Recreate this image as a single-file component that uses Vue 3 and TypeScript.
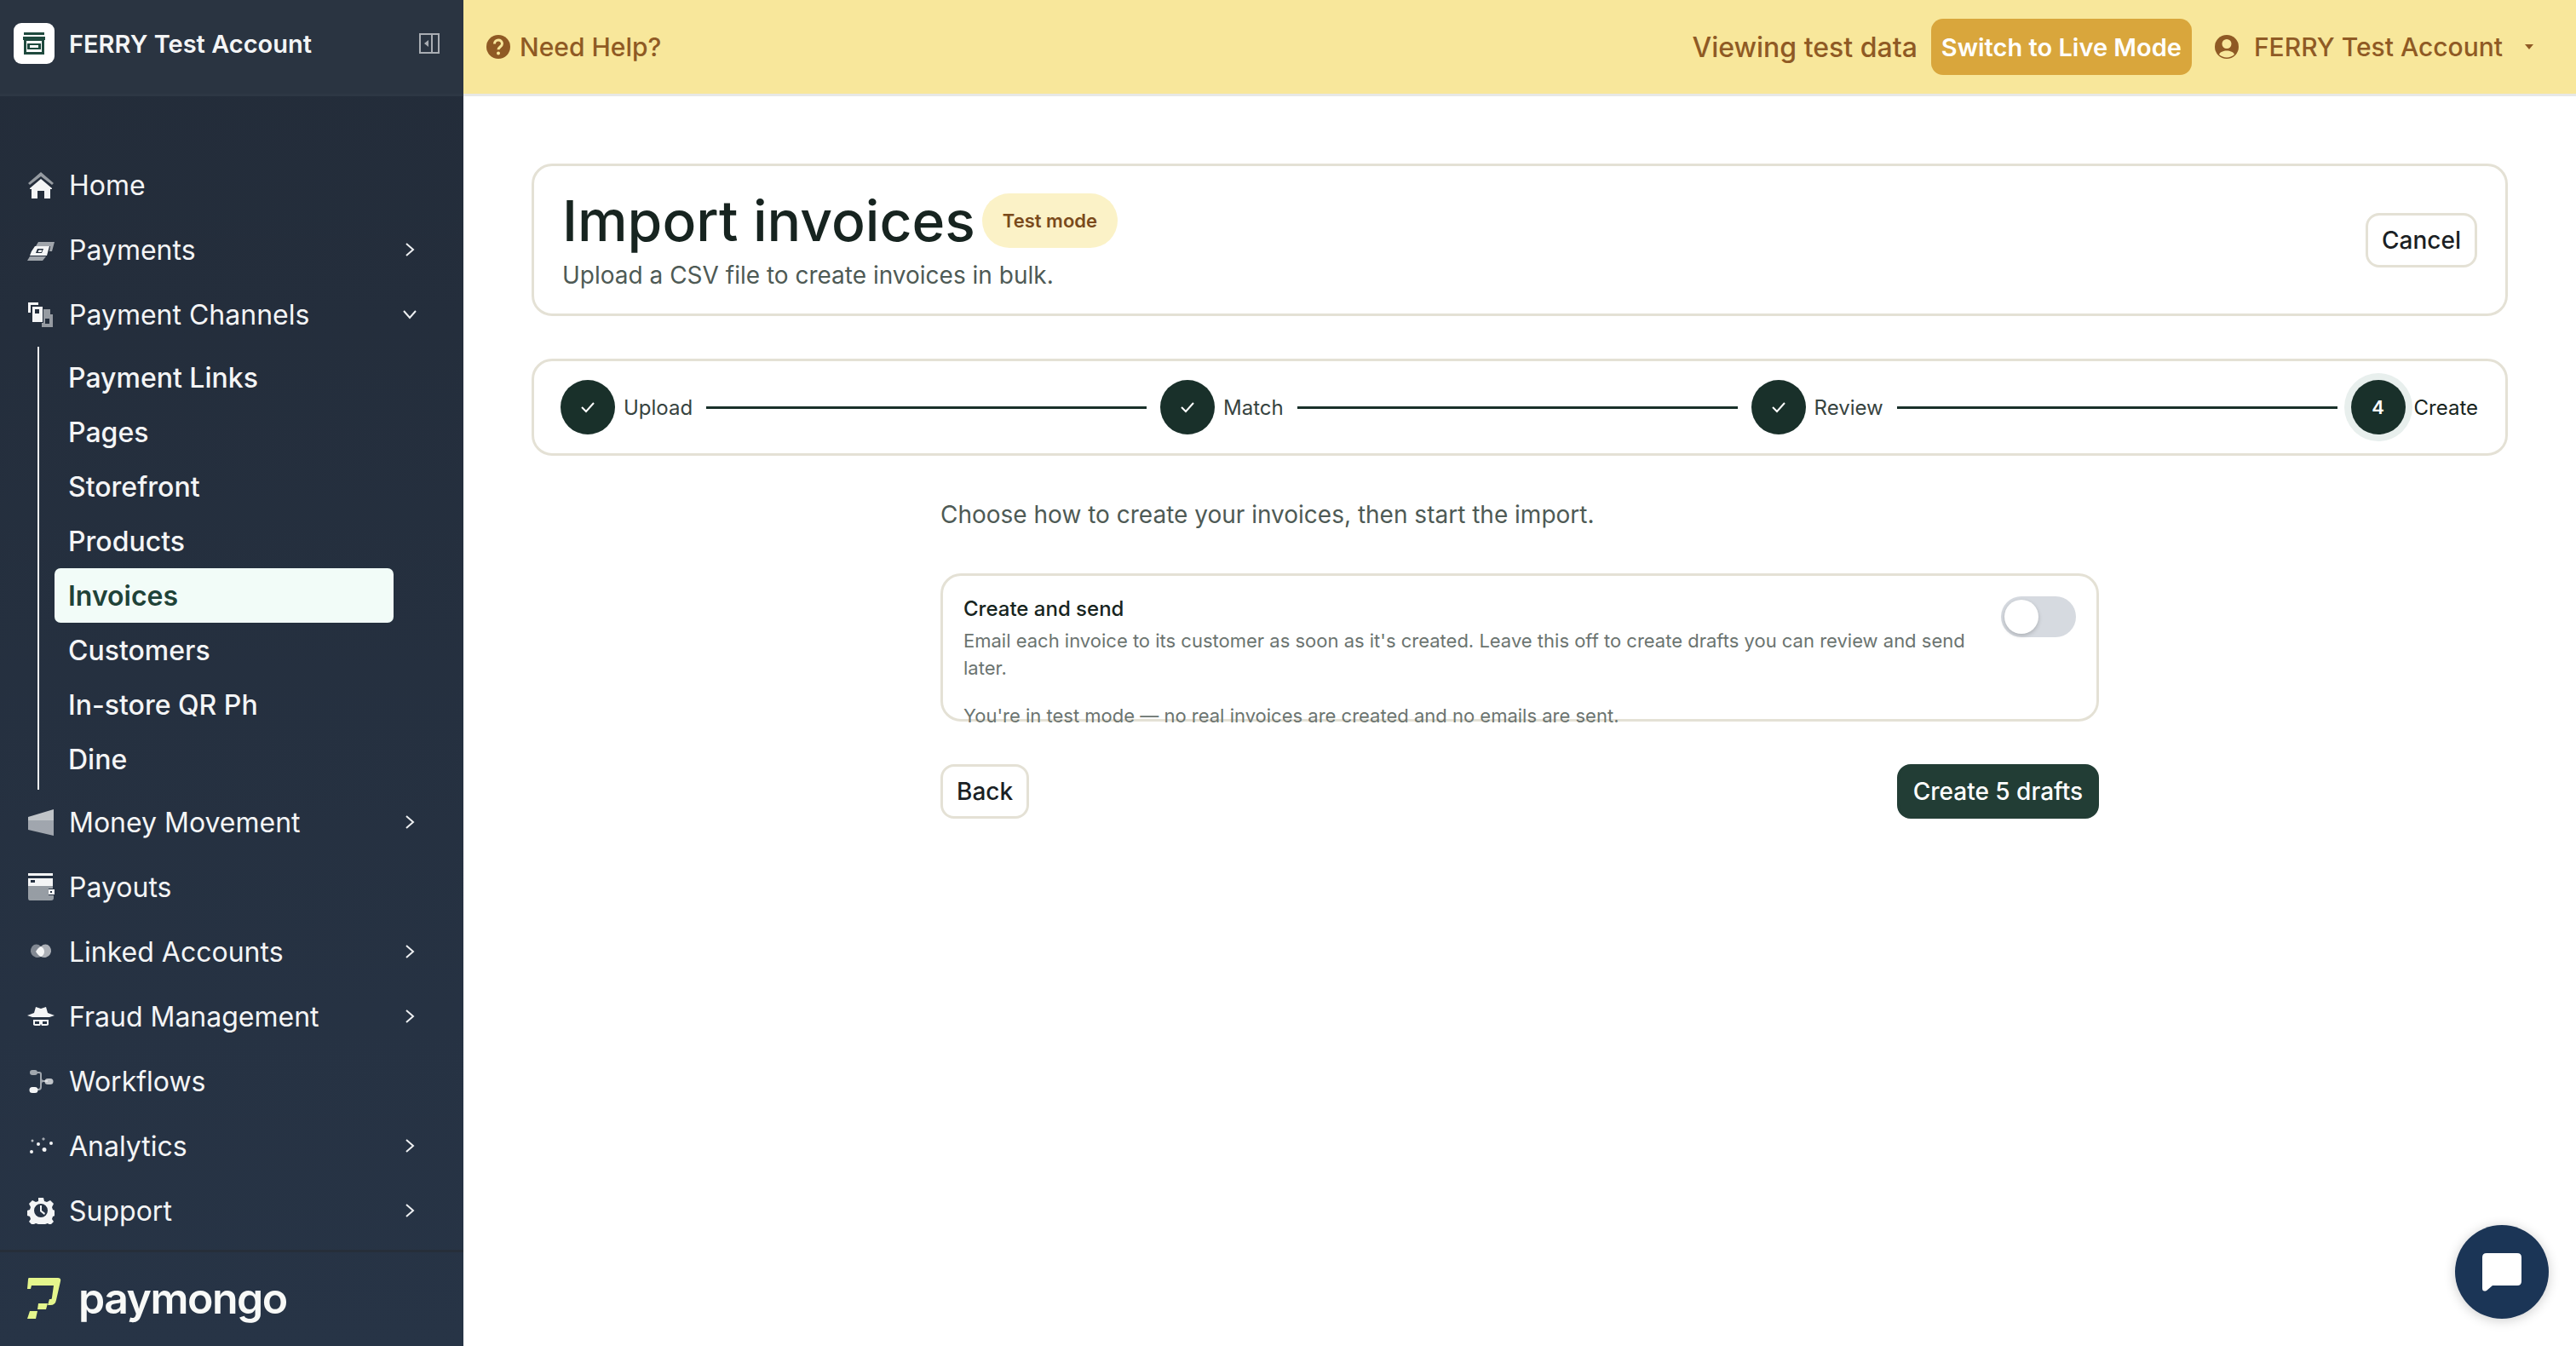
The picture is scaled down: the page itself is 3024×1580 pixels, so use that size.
<template>
  <div class="page">
    <aside class="sidebar">
      <div class="side-head">
        <div class="store-box">
          <svg width="30" height="30" viewBox="0 0 30 30">
            <path d="M3 2h24v3H3zM2 7h26v4h-1v17H3V11H2z" fill="#1f4a3e" />
            <path d="M6 12h18v13H6z" fill="#fff" />
            <path d="M7 15h16v7H7z" fill="#1f4a3e" />
            <path d="M10 17h10v3H10z" fill="#fff" />
          </svg>
        </div>
        <span class="store-name">FERRY Test Account</span>
        <svg class="panel-icon" width="24" height="24" viewBox="0 0 24 24">
          <path d="M1 1h22v22H1zM15 1v22" fill="none" stroke="#a9adb3" stroke-width="2" />
          <path d="M11 8v8l-5-4z" fill="#a9adb3" />
        </svg>
      </div>

      <nav class="nav">
        <template v-for="item in navItems" :key="item.label">
          <div class="nav-row">
            <svg class="nav-icon" width="32" height="32" viewBox="0 0 32 32">
              <path
                v-for="(p, i) in icons[item.icon]"
                :key="i"
                :d="p.d"
                fill="#f4f5f6"
                fill-rule="evenodd"
                :opacity="p.o ?? 1"
              />
            </svg>
            <span class="nav-label">{{ item.label }}</span>
            <svg v-if="item.arrow" class="chev" :class="{ open: item.children }" width="14" height="22" viewBox="0 0 14 22">
              <path d="M3 4l8 7-8 7" fill="none" stroke="#eef0f2" stroke-width="2" />
            </svg>
          </div>
          <div v-if="item.children" class="sub-list">
            <div v-for="c in item.children" :key="c" class="sub-row" :class="{ active: c === 'Invoices' }">{{ c }}</div>
          </div>
        </template>
      </nav>

      <div class="side-foot">
        <svg width="40" height="48" viewBox="0 0 40 48">
          <path d="M2 0h34q4 0 3 4l-5 22q-1 6-7 6h-3l2-7h2q1 0 1-2l2-14H5l-1 4H0l1-11q0-2 1-2z" fill="#e4f58c" />
          <path d="M13 30h11l-2 7H12zM3 39h9l-2 9H0z" fill="#e4f58c" />
        </svg>
        <span class="brand">paymongo</span>
      </div>
    </aside>

    <div class="content">
      <header class="topbar">
        <svg width="30" height="30" viewBox="0 0 30 30">
          <circle cx="15" cy="15" r="14" fill="#8f5a24" />
          <path d="M10.5 11.5c0-6 9-6 9 -.2 0 3.700-4.500 3.700-4.500 7" fill="none" stroke="#f8e79b" stroke-width="3" />
          <circle cx="15" cy="22.500" r="2" fill="#f8e79b" />
        </svg>
        <span class="help">Need Help?</span>
        <span class="spacer"></span>
        <span class="viewing">Viewing test data</span>
        <button class="live-btn">Switch to Live Mode</button>
        <svg class="user-icon" width="30" height="30" viewBox="0 0 30 30">
          <circle cx="15" cy="15" r="14" fill="#8f5a24" />
          <circle cx="15" cy="11.500" r="5.500" fill="#f8e79b" />
          <path d="M6 24c2-6 16-6 18 0-5 4.500-13 4.500-18 0z" fill="#f8e79b" />
        </svg>
        <span class="acct">FERRY Test Account</span>
        <svg class="caret" width="10" height="6" viewBox="0 0 10 6"><path d="M0 0h10L5 6z" fill="#8f5a24" /></svg>
      </header>

      <main class="body">
        <section class="card head-card">
          <div class="head-text">
            <div class="title-row">
              <h1>Import invoices</h1>
              <span class="badge">Test mode</span>
            </div>
            <p class="sub">Upload a CSV file to create invoices in bulk.</p>
          </div>
          <button class="btn">Cancel</button>
        </section>

        <section class="card stepper">
          <template v-for="(s, i) in steps" :key="s">
            <div class="step">
              <span class="dot" :class="{ current: i === 3 }">
                <svg v-if="i < 3" width="18" height="14" viewBox="0 0 18 14">
                  <path d="M2 7l5 5 9-10" fill="none" stroke="#fff" stroke-width="2" />
                </svg>
                <template v-else>4</template>
              </span>
              <span class="step-label" :class="{ current: i === 3 }">{{ s }}</span>
            </div>
            <span v-if="i < 3" class="step-line"></span>
          </template>
        </section>

        <div class="form">
          <p class="lead">Choose how to create your invoices, then start the import.</p>
          <div class="card option">
            <div class="option-text">
              <div class="opt-title">Create and send</div>
              <div class="opt-desc">Email each invoice to its customer as soon as it's created. Leave this off to create drafts you can review and send later.</div>
              <div class="opt-note">You're in test mode — no real invoices are created and no emails are sent.</div>
            </div>
            <span class="toggle"><span class="knob"></span></span>
          </div>
          <div class="actions">
            <button class="btn">Back</button>
            <button class="btn primary">Create 5 drafts</button>
          </div>
        </div>
      </main>
    </div>

    <div class="chat">
      <svg width="48" height="46" viewBox="0 0 48 46">
        <path d="M6 1h36q5 0 5 5v28q0 5-5 5H13l-7 6q-5 2-5-3V6q0-5 5-5z" fill="#fff" />
      </svg>
    </div>
  </div>
</template>

<script setup lang="ts">
interface NavItem {
  label: string;
  icon: string;
  arrow?: boolean;
  children?: string[];
}

const navItems: NavItem[] = [
  { label: "Home", icon: "home" },
  { label: "Payments", icon: "payments", arrow: true },
  {
    label: "Payment Channels",
    icon: "channels",
    arrow: true,
    children: ["Payment Links", "Pages", "Storefront", "Products", "Invoices", "Customers", "In-store QR Ph", "Dine"],
  },
  { label: "Money Movement", icon: "money", arrow: true },
  { label: "Payouts", icon: "payouts" },
  { label: "Linked Accounts", icon: "linked", arrow: true },
  { label: "Fraud Management", icon: "fraud", arrow: true },
  { label: "Workflows", icon: "workflows" },
  { label: "Analytics", icon: "analytics", arrow: true },
  { label: "Support", icon: "support", arrow: true },
];

const steps = ["Upload", "Match", "Review", "Create"];

// two-tone sidebar icons, o is the opacity of the darker layer
const icons: Record<string, { d: string; o?: number }[]> = {
  home: [
    { d: "M16 1l15 13-2 2L16 6 3 16l-2-2z", o: 0.55 },
    { d: "M16 9l13 11v1h-2v11h-7v-9h-8v9H5V21H3v-1z" },
  ],
  payments: [
    { d: "M10 12l3-5h19l-3 11h-3l1-6z", o: 0.6 },
    { d: "M5 18l4-6h17l-3 11H3zM12 15l-2 5h7l2-5z" },
    { d: "M13.500 16.500h4l-1 2.500h-4z" },
    { d: "M0 29l3-5h19l-4 5z", o: 0.6 },
  ],
  channels: [
    { d: "M1 2h12v3H4v9H1z" },
    { d: "M6 7h12v18H6zM9 10v5h5v-5z" },
    { d: "M19 10h8v6h3v15H17v-5h2zM21 21v6h5v-6z", o: 0.55 },
  ],
  money: [
    { d: "M1 10L31 1v13H1z", o: 0.75 },
    { d: "M1 14h30v18L1 25z", o: 0.6 },
  ],
  payouts: [
    { d: "M1 0h29v3H1z" },
    { d: "M1 6h29v9H1zM4 8v3h5V8z" },
    { d: "M1 15h29v3h-5v8h6v3q0 3-3 3H3q-2 0-2-3z", o: 0.55 },
    { d: "M25 19h7v6h-7zM27 21v2h2v-2z" },
  ],
  linked: [
    { d: "M8 8a8 8 0 0 1 8 2 8 8 0 0 1 0 12 8 8 0 1 1-8-14z", o: 0.45 },
    { d: "M24 8a8 8 0 0 0-8 2 8 8 0 0 0 0 12 8 8 0 1 0 8-14z", o: 0.65 },
    { d: "M10 16q3-5 6-6 4 2 4 6t-4 6q-3-1-6-6z" },
  ],
  fraud: [
    { d: "M8 12l2-7 6 2 6-2 2 7 8 3-6 2H6l-6-2z" },
    { d: "M7 20h18v6q-1 1-3 1h-5l-1-2-1 2h-5q-2 0-3-1zM9 22v3h5v-3zM18 22v3h5v-3z" },
  ],
  workflows: [
    { d: "M6 3h3a3 3 0 0 1 0 6H6a3 3 0 0 1 0-6z", o: 0.6 },
    { d: "M6 23h3a3.500 3.500 0 0 1 0 7H6a3.500 3.500 0 0 1 0-7z" },
    { d: "M24 13h3a3.500 3.500 0 0 1 0 7h-3a3.500 3.500 0 0 1 0-7z", o: 0.75 },
    { d: "M12 5h2q3 0 3 3v5q0 2 2 2h5v2h-5q-2 0-2 2v4q0 4-4 4h-1v-2h1q2 0 2-2V8q0-1-1-1h-2z", o: 0.6 },
  ],
  analytics: [
    { d: "M6 8.500a1.500 1.500 0 1 1 0 3 1.500 1.500 0 0 1 0-3z", o: 0.7 },
    { d: "M5 21a2 2 0 1 1 0 4 2 2 0 0 1 0-4zM20 18a2.500 2.500 0 1 1 0 5 2.500 2.500 0 0 1 0-5zM13 12a2 2 0 1 1 0 4 2 2 0 0 1 0-4zM28 11a2 2 0 1 1 0 4 2 2 0 0 1 0-4z" },
    { d: "M19 6l2 2-2 2-2-2z", o: 0.6 },
  ],
  support: [
    {
      d: "M13 1h6l1 4 3 1 4-2 4 4-2 4 1 3 3 1v6l-3 1-1 3 2 3-4 4-3-2-3 1-1 3h-6l-1-3-3-1-4 2-4-4 2-3-1-3-3-1v-6l3-1 1-3-2-4 4-4 4 2 3-1zM16 8a8 8 0 1 0 0 16 8 8 0 0 0 0-16z",
    },
    { d: "M15 10h2v6l4 3-1 2-5-4z" },
  ],
};
</script>

<style scoped>
.page {
  display: flex;
  width: 3024px;
  height: 1580px;
  overflow: hidden;
  position: relative;
  background: #fff;
  font-family: Inter, "Liberation Sans", sans-serif;
}

.sidebar {
  width: 544px;
  flex: none;
  display: flex;
  flex-direction: column;
  color: #f4f5f6;
  background: linear-gradient(180deg, #232c39 0%, #273446 100%);
}

.side-head {
  height: 113px;
  flex: none;
  display: flex;
  align-items: center;
  padding: 0 28px 8px 16px;
  box-sizing: border-box;
  background: #2a3441;
  border-bottom: 3px solid #2d3744;
}

.store-box {
  width: 48px;
  height: 48px;
  border-radius: 9px;
  background: #fff;
  display: flex;
  align-items: center;
  justify-content: center;
}

.store-name {
  margin-left: 17px;
  font-size: 29px;
  font-weight: 600;
  flex: 1;
}

.nav {
  flex: 1;
  padding-top: 66px;
}

.nav-row {
  height: 76px;
  display: flex;
  align-items: center;
  padding-left: 32px;
}

.nav-label {
  margin-left: 17px;
  font-size: 32px;
  flex: 1;
}

.chev {
  margin-right: 56px;
}

.chev.open {
  transform: rotate(90deg);
}

.sub-list {
  margin-left: 44px;
  width: 420px;
  border-left: 2px solid #f1f2f3;
  padding: 4px 0 4px 18px;
  box-sizing: border-box;
}

.sub-row {
  height: 64px;
  width: 398px;
  display: flex;
  align-items: center;
  padding-left: 16px;
  box-sizing: border-box;
  border-radius: 7px;
  font-size: 32px;
  font-weight: 500;
}

.sub-row.active {
  background: #f2fcf8;
  color: #1f4338;
  font-weight: 600;
}

.side-foot {
  height: 113px;
  flex: none;
  display: flex;
  align-items: flex-start;
  padding: 30px 0 0 32px;
  box-sizing: border-box;
  border-top: 3px solid #262e3a;
}

.brand {
  margin-left: 20px;
  margin-top: -6px;
  font-size: 50px;
  font-weight: 600;
  letter-spacing: -1.500px;
  color: #f8f9f7;
}

.content {
  flex: 1;
  display: flex;
  flex-direction: column;
  min-width: 0;
}

.topbar {
  height: 113px;
  flex: none;
  box-sizing: border-box;
  background: #f8e79b;
  border-bottom: 3px solid #e7e8e6;
  display: flex;
  align-items: center;
  padding: 0 50px 0 26px;
  color: #8f5a24;
  font-weight: 500;
}

.help {
  margin-left: 10px;
  font-size: 30px;
}

.spacer {
  flex: 1;
}

.viewing {
  font-size: 32px;
}

.live-btn {
  margin-left: 16px;
  height: 66px;
  width: 306px;
  border: 0;
  border-radius: 14px;
  background: #d9a63c;
  color: #fff;
  font: 600 29px Inter, sans-serif;
}

.user-icon {
  margin-left: 26px;
}

.acct {
  margin-left: 17px;
  font-size: 30px;
}

.caret {
  margin-left: 26px;
}

.body {
  flex: 1;
  padding: 79px 80px 0;
  display: flex;
  flex-direction: column;
}

.card {
  border: 3px solid #e4e1d5;
  border-radius: 24px;
  box-sizing: border-box;
  background: #fff;
}

.head-card {
  height: 179px;
  display: flex;
  align-items: center;
  justify-content: space-between;
  padding: 0 33px;
}

.title-row {
  display: flex;
  align-items: center;
  gap: 8px;
}

h1 {
  margin: 0;
  font-size: 66px;
  font-weight: 500;
  line-height: 76px;
  color: #172420;
}

.badge {
  height: 64px;
  padding: 0 24px;
  display: flex;
  align-items: center;
  border-radius: 32px;
  background: #fbf2c7;
  color: #7a4a1b;
  font-size: 22px;
  font-weight: 600;
}

.sub {
  margin: 6px 0 0;
  font-size: 28px;
  line-height: 40px;
  color: #4e5a55;
}

.btn {
  height: 64px;
  padding: 0 16px;
  border: 3px solid #e4e1d5;
  border-radius: 16px;
  background: #fff;
  color: #1b1f24;
  font: 500 28px Inter, sans-serif;
}

.btn.primary {
  border-color: #223d35;
  background: #223d35;
  color: #fff;
}

.stepper {
  margin-top: 50px;
  height: 114px;
  display: flex;
  align-items: center;
  padding: 0 32px 0 31px;
}

.step {
  display: flex;
  align-items: center;
  gap: 10px;
}

.dot {
  width: 64px;
  height: 64px;
  border-radius: 50%;
  background: #19302a;
  color: #fff;
  font-size: 22px;
  font-weight: 600;
  display: flex;
  align-items: center;
  justify-content: center;
}

.dot.current {
  box-shadow: 0 0 0 8px #e8efed;
}

.step-label {
  font-size: 24px;
  color: #37433f;
}

.step-label.current {
  color: #172420;
}

.step-line {
  flex: 1;
  height: 3px;
  margin: 0 16px;
  background: #19302a;
}

.form {
  width: 1360px;
  margin: 0 auto;
}

.lead {
  margin: 49px 0;
  font-size: 28px;
  line-height: 40px;
  color: #4e5a55;
}

.option {
  height: 174px;
  display: flex;
  align-items: flex-start;
  justify-content: space-between;
  padding: 22px 24px 0;
}

.opt-title {
  font-size: 24px;
  line-height: 34px;
  font-weight: 500;
  color: #172420;
}

.opt-desc,
.opt-note {
  font-size: 22px;
  line-height: 32px;
  color: #6b7470;
}

.opt-desc {
  margin-top: 4px;
}

.opt-note {
  margin-top: 24px;
}

.toggle {
  width: 88px;
  height: 48px;
  margin-top: 2px;
  border-radius: 24px;
  background: #d6dae0;
  padding: 4px;
  box-sizing: border-box;
  flex: none;
}

.knob {
  display: block;
  width: 40px;
  height: 40px;
  border-radius: 50%;
  background: #fff;
  box-shadow: 0 2px 5px rgba(0, 0, 0, 0.2);
}

.actions {
  margin-top: 50px;
  display: flex;
  justify-content: space-between;
}

.chat {
  position: absolute;
  left: 2882px;
  top: 1438px;
  width: 110px;
  height: 110px;
  border-radius: 50%;
  background: #1b3556;
  box-shadow: 0 2px 14px rgba(0, 0, 0, 0.2);
  display: flex;
  align-items: center;
  justify-content: center;
}
</style>

<style>
html,
body {
  margin: 0;
  background: #fff;
}
</style>
